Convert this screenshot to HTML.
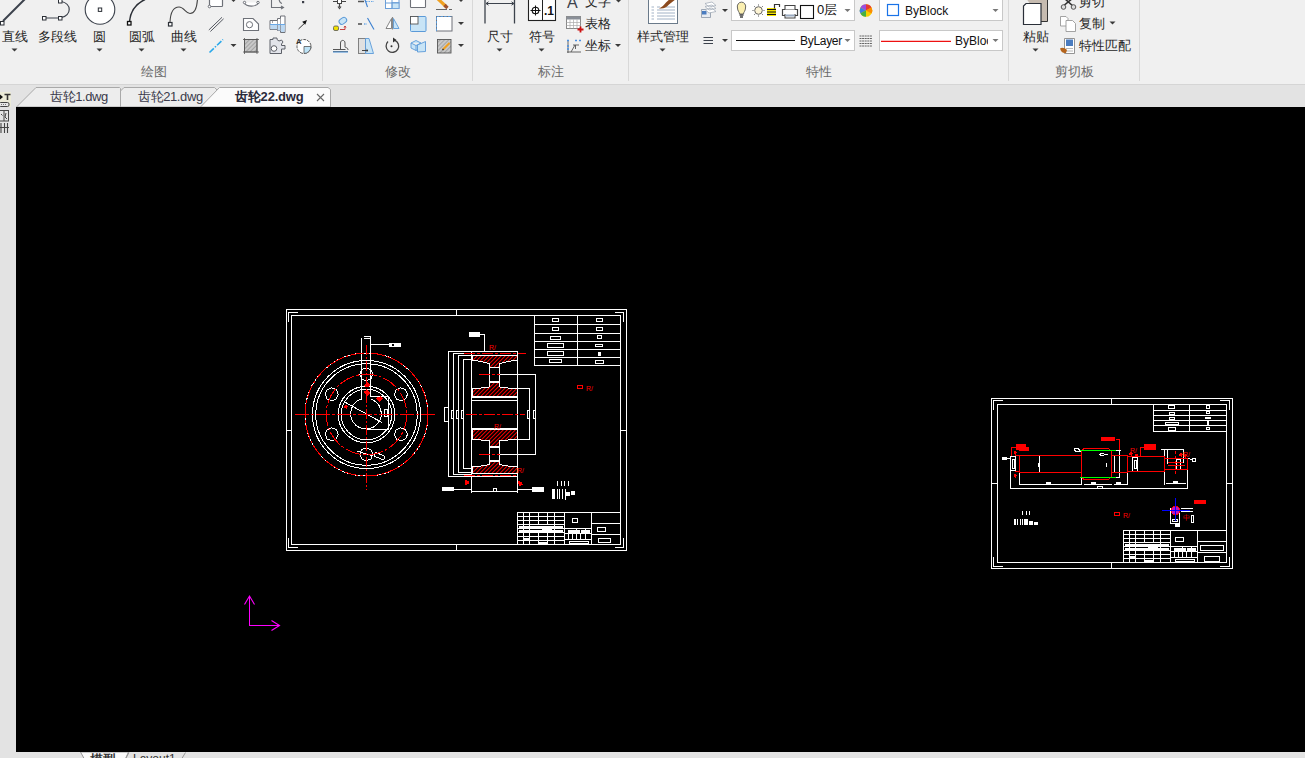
<!DOCTYPE html>
<html><head><meta charset="utf-8">
<style>
*{margin:0;padding:0;box-sizing:border-box}
html,body{width:1305px;height:758px;overflow:hidden;background:#e3e3e3;font-family:"Liberation Sans",sans-serif;color:#333}
#ribbon{position:absolute;left:0;top:0;width:1305px;height:85px;background:#f0f0f0;border-bottom:1px solid #d5d5d5;overflow:hidden}
.t{position:absolute;white-space:nowrap;font-size:13px;line-height:15px;color:#262626}
.glab{position:absolute;top:64px;font-size:13px;line-height:15px;color:#6a6a6a;white-space:nowrap}
.sep{position:absolute;top:0;width:1px;height:81px;background:#d8d8d8}
.cb{position:absolute;white-space:nowrap;font-size:12px;line-height:14px;color:#111}
#tabs{position:absolute;left:0;top:85px;width:1305px;height:22px}
.tab{position:absolute;top:4px;font-size:13px;line-height:16px;letter-spacing:-0.4px;white-space:nowrap;color:#3a3a4a}
#canvas{position:absolute;left:16px;top:107px;width:1289px;height:645px;background:#000;overflow:hidden}
</style></head><body>
<div id="ribbon">
<svg id="rsvg" width="1305" height="84" style="position:absolute;left:0;top:0">
<defs>
<pattern id="hat" width="3" height="3" patternUnits="userSpaceOnUse" patternTransform="rotate(45)"><rect width="3" height="3" fill="#c8c8c8"/><line x1="0" y1="0" x2="0" y2="3" stroke="#8a8a8a" stroke-width="1.2"/></pattern>
</defs>
<g fill="#3a3a3a">
<!-- dropdown arrows -->
<path d="M11.5 48.5h6l-3 3z"/><path d="M96.5 48.5h6l-3 3z"/><path d="M138.5 48.5h6l-3 3z"/><path d="M180.5 48.5h6l-3 3z"/>
<path d="M230.5 -1h6l-3 3z"/><path d="M230.5 44h6l-3 3z"/>
<path d="M458 -1h6l-3 3z"/><path d="M458 22h6l-3 3z"/><path d="M458 44h6l-3 3z"/>
<path d="M496.5 48.5h6l-3 3z"/><path d="M538.5 48.5h6l-3 3z"/>
<path d="M615.5 -0.5h6l-3 3z"/><path d="M615 44h6l-3 3z"/>
<path d="M659.5 48.5h6l-3 3z"/>
<path d="M722 9h6l-3 3z"/><path d="M722 39h6l-3 3z"/>
<path d="M1032.5 48.5h6l-3 3z"/><path d="M1109.5 21.5h6l-3 3z"/>
</g>
<!-- 直线 -->
<line x1="3" y1="21" x2="26" y2="-2" stroke="#3c424c" stroke-width="2"/>
<rect x="0.5" y="21.5" width="3.5" height="3.5" fill="#fff" stroke="#2b2f36" stroke-width="1"/>
<!-- 多段线 -->
<path d="M46 18H59.5M61.5 1.5A10.5 8.3 0 0 1 61.5 17.5" fill="none" stroke="#3c424c" stroke-width="1.2"/>
<rect x="42.5" y="16.5" width="3.5" height="3.5" fill="#fff" stroke="#2b2f36"/>
<rect x="58.5" y="16.5" width="3.5" height="3.5" fill="#fff" stroke="#2b2f36"/>
<rect x="58.5" y="-0.5" width="3.5" height="3.5" fill="#fff" stroke="#2b2f36"/>
<!-- 圆 -->
<circle cx="100" cy="9.5" r="14.8" fill="#fff" stroke="#3c424c" stroke-width="1.1"/>
<rect x="98.3" y="8" width="3.4" height="3.4" fill="#fff" stroke="#2b2f36"/>
<!-- 圆弧 -->
<path d="M129.5 21.5Q131 6 145 -0.5" fill="none" stroke="#2b2f36" stroke-width="1.5"/>
<rect x="127.5" y="21.5" width="3.5" height="3.5" fill="#fff" stroke="#111" stroke-width="1.3"/>
<!-- 曲线 -->
<path d="M170 22C170.5 12 174 7 179 7C184 7 186 13.5 190 13.5C195 13.5 197 7 197.5 -1" fill="none" stroke="#444" stroke-width="1.1"/>
<rect x="168.5" y="22.5" width="3.5" height="3.5" fill="#fff" stroke="#2b2f36" stroke-width="1.2"/>
<!-- row1 small icons -->
<rect x="209.5" y="-4" width="13" height="10.5" rx="0.8" fill="#fff" stroke="#6e7178" stroke-width="1.2"/>
<circle cx="209.5" cy="6.5" r="1.3" fill="#fff" stroke="#6e7178"/>
<path d="M244 2.5A8 5.5 0 0 0 259 2.5" fill="#fff" stroke="#6e7178" stroke-width="1.1"/>
<circle cx="244.5" cy="2.5" r="1.2" fill="#fff" stroke="#6e7178"/><circle cx="258" cy="2.5" r="1.2" fill="#fff" stroke="#6e7178"/>
<path d="M271.5 -2V7.5H283.5M281 6l2.5 1.5L281 9M279 -1Q279.5 3 282 3.5" fill="none" stroke="#6e7178" stroke-width="1.1"/>
<rect x="302" y="1" width="2.2" height="2.2" fill="#3b3f48"/>
<!-- row2 -->
<path d="M208.8 30L222 17.3M210.4 31.5L223.6 18.8" stroke="#575b63" stroke-width="1"/>
<path d="M243.5 18.5H253L258.5 24V30.5H243.5Z" fill="#fff" stroke="#6e7178" stroke-width="1.1"/>
<circle cx="249.5" cy="24.7" r="3.1" fill="#fff" stroke="#6e7178" stroke-width="1"/>
<path d="M270 20.5H277.5V18.5H280.5V16H285V32.5H280.5V30.5H277.5V29.5H270Z" fill="#fff" stroke="#6e7178" stroke-width="1"/>
<rect x="270.5" y="25" width="14" height="4.2" fill="#bcd8f2"/><rect x="278" y="25" width="6.5" height="5.5" fill="#bcd8f2"/><rect x="281" y="25" width="3.5" height="7" fill="#bcd8f2"/>
<path d="M277.5 20.5V29.5M280.5 18.5V30.5M272.5 21V23" stroke="#8a8d94" stroke-width="0.8"/>
<line x1="270" y1="24.5" x2="285" y2="24.5" stroke="#6aa8e6" stroke-width="1"/>
<path d="M298.5 29L304 23.8" stroke="#333" stroke-width="1"/><path d="M307 20L302.2 21.8L305.2 24.8Z" fill="#111"/>
<!-- row3 -->
<path d="M209.5 52.5L223 39.5" stroke="#2aa8ea" stroke-width="1.6" stroke-dasharray="6 1.5 1.5 1.5"/>
<rect x="244.5" y="39.5" width="12.5" height="12.5" fill="url(#hat)" stroke="#666" stroke-width="1"/>
<path d="M243 39.5H259M243 52H259M244.5 38V54M257 38V54" stroke="#555" stroke-width="0.8"/>
<path d="M270 39.5H273V38H277V39.5L279 41L281.5 40L283 42L281.5 44V45.5H285V49H281.5V53.5H270Z" fill="#e2e4ea" stroke="#5d6068" stroke-width="1"/>
<circle cx="274" cy="48.5" r="2.8" fill="#fff" stroke="#5d6068"/>
<circle cx="304" cy="46.5" r="7" fill="#fff" stroke="#555" stroke-width="1" stroke-dasharray="3 1"/>
<path d="M304 46.5H311A7 7 0 0 1 304 53.5Z" fill="#bde3f7" stroke="#555" stroke-width="0.8"/>
<text x="296" y="44" font-family="Liberation Sans" font-size="7.5" font-weight="bold" fill="#333">A</text>
<!-- 修改 row1 -->
<path d="M333 1.5H346M339.5 -3V7" stroke="#444" stroke-width="1.2"/><rect x="337.5" y="-0.5" width="4" height="4" fill="#fff" stroke="#444"/>
<path d="M336 1.5l-1.5 0M338 6.5l1.5 2l1.5 -2" stroke="#444" stroke-width="1.2" fill="none"/>
<path d="M358 1.5H364" stroke="#555" stroke-width="1.5"/><path d="M366 1.5H374" stroke="#6aa8e6" stroke-width="1.2" stroke-dasharray="1.5 1"/>
<path d="M364 -3L367.5 7" stroke="#3a7fd0" stroke-width="1.1"/>
<rect x="385.5" y="-2" width="13.5" height="10.5" fill="#fff" stroke="#6a9ed8" stroke-width="1"/>
<rect x="392" y="2.5" width="7" height="6" fill="#c8e4f6" stroke="#6a9ed8" stroke-width="0.8"/><path d="M385.5 3H399M392 -2V8.5" stroke="#6a9ed8" stroke-width="1"/>
<rect x="410.5" y="-3" width="15" height="10.5" rx="0.8" fill="#fff" stroke="#6e7178" stroke-width="1.1"/>
<path d="M437 -2L446 6.5" stroke="#f0a020" stroke-width="3.2"/><path d="M444.5 5L447.5 8" stroke="#a0522d" stroke-width="3.2"/>
<path d="M436 9.5H447M449 9.5H452" stroke="#555" stroke-width="0.9"/>
<!-- 修改 row2 -->
<rect x="333.5" y="26" width="5" height="4.5" rx="1.5" fill="#f0e000" stroke="#555" stroke-width="0.8"/>
<rect x="339" y="18" width="8" height="5.5" rx="2.7" transform="rotate(-35 343 21)" fill="#c8e4f6" stroke="#5b9ad8" stroke-width="1"/>
<path d="M340 29.5H345V26.5M344 27.5l1-1.5l1 1.5" stroke="#c03030" fill="none" stroke-width="0.9"/>
<path d="M358 24H362" stroke="#555" stroke-width="1.6"/><path d="M364 24H367" stroke="#6aa8e6" stroke-width="1.3" stroke-dasharray="1.5 1"/><path d="M367.5 18L374 29.5" stroke="#3a7fd0" stroke-width="1.1"/>
<path d="M391.5 18.5L386 28.5H391.5Z" fill="#fff" stroke="#777" stroke-width="0.9"/><path d="M393.5 18.5L399 28.5H393.5Z" fill="#c8e4f6" stroke="#5b9ad8" stroke-width="0.9"/><line x1="392.5" y1="17" x2="392.5" y2="29.5" stroke="#888" stroke-width="1.2"/>
<rect x="410.5" y="16.5" width="15.5" height="15" rx="1" fill="#c8e4f6" stroke="#5b9ad8" stroke-width="1"/><rect x="410.5" y="16.5" width="7.5" height="7.5" fill="#fff" stroke="#555" stroke-width="0.9"/>
<rect x="436.5" y="16.5" width="15.5" height="14.5" fill="#fff" stroke="#6e7178" stroke-width="1"/><path d="M436.5 31V16.5H452" fill="none" stroke="#5b9ad8" stroke-width="1" stroke-dasharray="2.5 1.2"/>
<!-- 修改 row3 -->
<path d="M333 51.5H348M333 49.5H345.5M340.5 49.5V43C340.5 39.5 345 39.5 345 43V47C345 48 348 47 348 50" fill="none" stroke="#555" stroke-width="1"/><path d="M333 52H348" stroke="#5b9ad8" stroke-width="1.2"/>
<rect x="358.5" y="38.5" width="7" height="15" fill="#e0e0e0" stroke="#777" stroke-width="0.9"/><path d="M365.5 38.5H369L373.5 53.5H365.5Z" fill="#c8e4f6" stroke="#5b9ad8" stroke-width="0.9"/><path d="M362 50.5H368M366.5 49.3L368 50.5L366.5 51.7" fill="none" stroke="#333" stroke-width="0.9"/>
<path d="M395 40.3A6.3 6.3 0 1 1 388 41.5" fill="none" stroke="#444" stroke-width="1.3"/><path d="M393 37.5L396.5 40L393 42.5Z" fill="#333"/><circle cx="391.5" cy="46.3" r="1" fill="#333"/>
<path d="M411 43L416 40.5L421 43V48L416 50.5L411 48Z M416 45.5V50.5M411 43L416 45.5L421 43" fill="#c8e4f6" stroke="#5b9ad8" stroke-width="0.9"/><path d="M417.5 45L425.5 41.5V51.5L417.5 52Z" fill="#c8e4f6" stroke="#5b9ad8" stroke-width="0.9"/>
<rect x="437.5" y="39.5" width="13.5" height="13.5" fill="url(#hat)" stroke="#555" stroke-width="0.9"/><path d="M443 49.5L449.5 43" stroke="#f0a020" stroke-width="2.2"/><path d="M442.5 50L443.5 49" stroke="#333" stroke-width="1.5"/>
<!-- 标注 -->
<path d="M485 -1V23.5M514.5 -1V23.5" stroke="#3c424c" stroke-width="1.3"/>
<path d="M486 3.5H514M488.5 1.8L486 3.5L488.5 5.2M511.5 1.8L514 3.5L511.5 5.2" fill="none" stroke="#3c424c" stroke-width="1"/>
<rect x="528.5" y="-1" width="27" height="21.5" fill="#fff" stroke="#222" stroke-width="1.1"/>
<line x1="542.5" y1="-1" x2="542.5" y2="20.5" stroke="#222" stroke-width="1"/>
<circle cx="535.5" cy="10.5" r="3.3" fill="none" stroke="#111" stroke-width="1.1"/><path d="M530.5 10.5H540.5M535.5 5.5V15.5" stroke="#111" stroke-width="1"/>
<text x="544" y="15" font-family="Liberation Sans" font-size="12" font-weight="bold" fill="#111">.1</text>
<text x="567" y="8" font-family="Liberation Sans" font-size="16" fill="#3c424c">A</text>
<rect x="566.5" y="16.5" width="14" height="12" fill="#fff" stroke="#888" stroke-width="1"/><rect x="566.5" y="16.5" width="14" height="3" fill="#8a8f98"/>
<path d="M566.5 22.5H580.5M566.5 25.5H580.5M570 19.5V28.5M573.5 19.5V28.5M577 19.5V28.5" stroke="#aaa" stroke-width="0.7"/>
<path d="M577.5 29.5H583.5M580.5 26.5V32.5" stroke="#cc1111" stroke-width="1.8"/>
<path d="M568 40.5V53M567 52H581M571 52L575 45M573 45H579M575.5 45V49" fill="none" stroke="#555" stroke-width="0.9"/>
<path d="M567 40.5H569M567 46H569M575 40.5H577M579 40.5H581M567 49H569" stroke="#4a90e2" stroke-width="1.3"/>
<!-- 特性 -->
<rect x="648.5" y="-3" width="29" height="26.5" fill="#fff" stroke="#6a7a8a" stroke-width="1"/>
<path d="M651.5 7H654M651.5 10H654M651.5 13H654M651.5 16H654M651.5 19H654M657 7H660M666 7H675M657 10H675M657 13H675M657 16H675M657 19H675" stroke="#8aa0b8" stroke-width="0.8"/>
<path d="M659 8.5C662 7 664 5 666 2.5L672 -3L676 -1L669 4.5C667 7 664 9 659 8.5Z" fill="#8b4a1e"/>
<path d="M701.5 9.5H710.5V17.5H701.5Z" fill="#e8ecf2" stroke="#8a96a6" stroke-width="0.8"/><rect x="702" y="11" width="4.5" height="3.5" fill="#4a7cc0"/>
<path d="M705 3.5L712 2L716 5.5L709 7Z M705 6.5L712 5L716 8.5L709 10Z M705 9.5L712 8L716 11.5L709 13Z" fill="#fff" stroke="#9aa4b0" stroke-width="0.7"/>
<path d="M703.5 37.5H713M703.5 40.5H713M703.5 43.5H713" stroke="#3c424c" stroke-width="1.2"/>
<!-- combos -->
<rect x="731.5" y="-0.5" width="123" height="21" fill="#fff" stroke="#c8c8c8"/>
<rect x="731.5" y="30.5" width="123" height="20" fill="#fff" stroke="#c8c8c8"/>
<rect x="879.5" y="-0.5" width="123" height="21" fill="#fff" stroke="#c8c8c8"/>
<rect x="879.5" y="30.5" width="123" height="20" fill="#fff" stroke="#c8c8c8"/>
<g fill="#777"><path d="M844.5 9h6l-3 3z"/><path d="M844.5 39h6l-3 3z"/><path d="M992.5 9h6l-3 3z"/><path d="M992.5 39h6l-3 3z"/></g>
<path d="M737.5 8A4.2 4.5 0 1 1 745.5 8C745.5 11 743.5 12 743.5 14H739.5C739.5 12 737.5 11 737.5 8Z" fill="#fbefb0" stroke="#555" stroke-width="0.9"/><path d="M739.5 15h4M740 17h3" stroke="#444" stroke-width="1.4"/>
<circle cx="758.5" cy="10.5" r="3.8" fill="#fdf4d4" stroke="#555" stroke-width="0.9"/>
<path d="M758.5 4.5V5.5M758.5 15.5V16.5M752.5 10.5H753.5M763.5 10.5H764.5M754.2 6.2L754.9 6.9M762.1 14.1L762.8 14.8M762.8 6.2L762.1 6.9M754.9 14.1L754.2 14.8" stroke="#444" stroke-width="0.9"/>
<rect x="767" y="8" width="9" height="8" fill="#f2e200"/><path d="M767 9.5H776M767 12H776M767 14.5H776" stroke="#111" stroke-width="1"/><path d="M774.5 8.5V4.5H779.5V7" fill="none" stroke="#333" stroke-width="1.2"/>
<path d="M782.5 9.5H797.5V15.5H782.5Z" fill="#fff" stroke="#444" stroke-width="1.2"/><path d="M785 9.5V5.5H795V9.5M785 14V18H795V14" fill="#fff" stroke="#444" stroke-width="1.1"/><rect x="785.5" y="14.5" width="9" height="2" fill="#9aaac0"/>
<rect x="800.5" y="5.5" width="13" height="13" fill="#fff" stroke="#111" stroke-width="1.1"/>
<line x1="736" y1="40.5" x2="795" y2="40.5" stroke="#111" stroke-width="1.2"/>
<circle cx="866" cy="10.5" r="6.3" fill="#f5d000"/>
<path d="M866 10.5L866 4.2A6.3 6.3 0 0 1 871.5 7.4Z" fill="#e53935"/><path d="M866 10.5L871.5 7.4A6.3 6.3 0 0 1 871.5 13.6Z" fill="#fb8c00"/>
<path d="M866 10.5L866 4.2A6.3 6.3 0 0 0 860.5 7.4Z" fill="#9c4de0"/><path d="M866 10.5L860.5 7.4A6.3 6.3 0 0 0 860.5 13.6Z" fill="#3b82e0"/><path d="M866 10.5L860.5 13.6A6.3 6.3 0 0 0 866 16.8Z" fill="#43b043"/>
<path d="M859.5 36H872M859.5 38.5H872M859.5 41H872M859.5 43.5H872M859.5 46H872" stroke="#555" stroke-width="0.9" stroke-dasharray="2 0.6"/>
<rect x="887.5" y="4.5" width="11" height="11" fill="#fff" stroke="#1a73e8" stroke-width="1.2"/>
<line x1="881" y1="41.3" x2="951" y2="41.3" stroke="#ee1111" stroke-width="1.2"/>
<!-- 剪切板 -->
<path d="M1025.5 -3H1047.5V21.5H1041" fill="#c6bbb0" stroke="#333" stroke-width="1"/>
<path d="M1026 3.5H1041V24.5H1023.5V6Z" fill="#fff" stroke="#2a2f38" stroke-width="1.2"/>
<path d="M1062 7L1073 -2M1064 -2L1074 7" stroke="#333" stroke-width="1.6"/><circle cx="1063.5" cy="7" r="2.3" fill="#ddd" stroke="#555"/><circle cx="1073.5" cy="7" r="2.3" fill="#ddd" stroke="#555"/>
<path d="M1060.5 16.5H1066L1068 18.5V26H1060.5Z" fill="#fff" stroke="#999" stroke-width="0.9"/>
<path d="M1066 20.5H1072.5L1075.5 23.5V31.5H1066Z" fill="#fff" stroke="#999" stroke-width="0.9"/>
<path d="M1064.5 38.5H1074.5V53.5H1064.5Z" fill="#fff" stroke="#888" stroke-width="0.9"/><rect x="1066" y="39.5" width="7" height="6.5" fill="#4a7cc0"/>
<path d="M1066 48.5H1073M1066 51H1073" stroke="#999" stroke-width="0.7"/>
<path d="M1060 48.5C1062 47 1065 48 1067 50L1066 53C1063 53.5 1061 52 1060 48.5Z" fill="#b5651d"/>
</svg>
  <div class="t" style="left:2px;top:29px">直线</div>
  <div class="t" style="left:38px;top:29px">多段线</div>
  <div class="t" style="left:93px;top:29px">圆</div>
  <div class="t" style="left:129px;top:29px">圆弧</div>
  <div class="t" style="left:171px;top:29px">曲线</div>
  <div class="glab" style="left:141px">绘图</div>
  <div class="sep" style="left:322px"></div>
  <div class="glab" style="left:385px">修改</div>
  <div class="sep" style="left:472px"></div>
  <div class="t" style="left:487px;top:29px">尺寸</div>
  <div class="t" style="left:529px;top:29px">符号</div>
  <div class="t" style="left:585px;top:-6px">文字</div>
  <div class="t" style="left:585px;top:16px">表格</div>
  <div class="t" style="left:585px;top:38px">坐标</div>
  <div class="glab" style="left:538px">标注</div>
  <div class="sep" style="left:628px"></div>
  <div class="t" style="left:637px;top:29px">样式管理</div>
  <div class="cb" style="left:817px;top:3px;font-size:13px">0层</div>
  <div class="cb" style="left:800px;top:34px;letter-spacing:-0.3px">ByLayer</div>
  <div class="cb" style="left:905px;top:4px">ByBlock</div>
  <div class="cb" style="left:955px;top:34px;width:33px;overflow:hidden">ByBlock</div>
  <div class="glab" style="left:806px">特性</div>
  <div class="sep" style="left:1008px"></div>
  <div class="t" style="left:1023px;top:29px">粘贴</div>
  <div class="t" style="left:1079px;top:-6px">剪切</div>
  <div class="t" style="left:1079px;top:16px">复制</div>
  <div class="t" style="left:1079px;top:38px">特性匹配</div>
  <div class="glab" style="left:1055px">剪切板</div>
  <div class="sep" style="left:1139px"></div>
</div>
<div id="tabs">
<svg width="1305" height="22" style="position:absolute;left:0;top:0">
<path d="M16.5 22L36 2.5H119.5L120.5 3.5V22Z" fill="#ededed" stroke="#a9a9a9" stroke-width="1"/>
<path d="M120.5 22V6L124 2.5H214.5L218 6V22Z" fill="#ededed" stroke="#a9a9a9" stroke-width="1"/>
<path d="M200.5 22L219.5 2.5H328L330.5 4.5V22Z" fill="#fbfbfb" stroke="#a9a9a9" stroke-width="1"/>
</svg>
<div class="tab" style="left:50px">齿轮1.dwg</div>
<div class="tab" style="left:138px">齿轮21.dwg</div>
<div class="tab" style="left:235px;font-weight:bold;color:#2a2a3a;letter-spacing:-0.2px">齿轮22.dwg</div>
<svg width="10" height="10" style="position:absolute;left:316px;top:8px"><path d="M1 1L8 8M8 1L1 8" stroke="#666" stroke-width="1.1"/></svg>
</div>
<svg width="16" height="60" style="position:absolute;left:0;top:85px">
<rect x="0" y="7" width="11" height="15" fill="#ecebd8"/>
<path d="M0 9.5L3 12L0 14.5Z" fill="#111"/>
<path d="M4.5 9.5H10.5M7.5 9.5V15" stroke="#333" stroke-width="1.6"/>
<rect x="-1" y="17.5" width="10" height="4" rx="1.5" fill="#e8e8e8" stroke="#444" stroke-width="1"/>
<path d="M1 19.5H7" stroke="#777" stroke-width="1" stroke-dasharray="1 1"/>
<rect x="-1" y="25.5" width="9.5" height="10.5" fill="none" stroke="#444" stroke-width="1"/>
<path d="M4 25.5V36M1 29L2.5 30.5M6 28L5 32L7 34" stroke="#444" stroke-width="1" fill="none"/>
<path d="M1 38V48M4.5 38V48M7.5 38V48M0 42.5H9" stroke="#444" stroke-width="1.1"/>
</svg>
<div id="canvas">
<svg width="1305" height="758" style="position:absolute;left:-16px;top:-107px" shape-rendering="crispEdges">
<defs>
<pattern id="rh" width="2.83" height="2.83" patternUnits="userSpaceOnUse" patternTransform="rotate(45)"><rect width="2.83" height="2.83" fill="#000"/><rect x="0" y="0" width="1.3" height="2.83" fill="#ff0000"/></pattern>
<g id="tb" fill="none" stroke="#fff" stroke-width="1">
<rect x="0.5" y="0.5" width="103" height="32"/>
<path d="M47 0.5V32.5M74.5 0.5V32.5M74.5 11.5H103.5M74.5 22.5H103.5M47 16.5H74.5"/>
<path d="M6.5 0.5V32.5M12.5 0.5V32.5M21.5 0.5V12.5M30.5 0.5V12.5M37.5 0.5V32.5M21.5 20.5V32.5M30.5 20.5V32.5"/>
<path d="M0.5 4.5H47M0.5 8.5H47M0.5 12.5H47M0.5 16.5H47M0.5 20.5H47M0.5 24.5H47M0.5 28.5H47"/>
<g fill="#fff" stroke="none"><rect x="2" y="13.5" width="44" height="2"/><rect x="2" y="17.5" width="44" height="2.2"/><rect x="7" y="25.5" width="5" height="2"/><rect x="22" y="29.5" width="8" height="2"/><rect x="25" y="17" width="10" height="3"/></g>

<path d="M47 21.5H74.5M47 27.5H74.5M51.5 21.5V27.5M55.5 21.5V27.5M59.5 21.5V27.5M63.5 21.5V27.5M68.5 16.5V27.5M59.5 16.5V21.5"/>
<rect x="50.5" y="18" width="12" height="2.5" fill="#fff" stroke="none"/><rect x="64" y="18" width="9" height="2.5" fill="#fff" stroke="none"/>
<rect x="52.5" y="29" width="19" height="2.5"/>

</g>
</defs>
<g fill="none" stroke="#fff" stroke-width="1">
<!-- ===== Drawing 1 frame ===== -->
<rect x="286.5" y="309.5" width="340" height="241"/>
<rect x="291.5" y="315.5" width="329" height="229"/>
<path d="M288.5 322V312.5H298M615 312.5H623.5V322M288.5 538V547.5H298M615 547.5H623.5V538"/>
<path d="M456.5 309.5V315.5M456.5 544.5V550.5M286.5 430.5H291.5M620.5 430.5H626.5"/>
<!-- table 1 -->
<path d="M534.5 315.5V365.5H620.5M577.5 315.5V365.5M534.5 324.5H620.5M534.5 333.5H620.5M534.5 341.5H620.5M534.5 349.5H620.5M534.5 357.5H620.5"/>
<rect x="552.5" y="318.5" width="6" height="3"/><rect x="552.5" y="327.5" width="6" height="3"/><rect x="550.5" y="336" width="10" height="3"/><rect x="547.5" y="343.5" width="16" height="4"/><rect x="547.5" y="351.5" width="16" height="4"/><rect x="549.5" y="359.5" width="12" height="3"/>
<rect x="596.5" y="318.5" width="6" height="3"/><rect x="596.5" y="327.5" width="6" height="3"/><rect x="597.5" y="335.5" width="4" height="3"/><rect x="595.5" y="344" width="7" height="2"/><rect x="598.5" y="352" width="2" height="3" fill="#fff"/><rect x="595.5" y="360" width="8" height="3"/>
</g>
<use href="#tb" x="517" y="512"/>
<g fill="none" stroke="#fff" stroke-width="1"><rect x="572.5" y="518.5" width="5" height="4"/><rect x="597.5" y="527.5" width="8" height="4"/><rect x="598.5" y="538" width="12" height="4.5"/></g>
<g fill="none" stroke="#fff" stroke-width="1">
<!-- ===== Circle view ===== -->
<circle cx="366.5" cy="414.5" r="61.5"/>
<circle cx="366.5" cy="414.5" r="54"/>
<circle cx="366.5" cy="414.5" r="50.7"/>
<circle cx="366.5" cy="414.5" r="28.3"/>
<circle cx="366.5" cy="414.5" r="25.3"/>
<path d="M361.5 399A15.3 15.3 0 1 0 371 399.2"/>
<g>
<polygon points="372.9,374.3 370.9,378.9 366.3,380.8 361.7,378.9 359.8,374.3 361.7,369.7 366.3,367.8 370.9,369.7" />
<polygon points="372.9,454.3 370.9,458.9 366.3,460.8 361.7,458.9 359.8,454.3 361.7,449.7 366.3,447.8 370.9,449.7" />
<g transform="translate(-34.6,20)"><polygon points="372.9,374.3 370.9,378.9 366.3,380.8 361.7,378.9 359.8,374.3 361.7,369.7 366.3,367.8 370.9,369.7"/></g>
<g transform="translate(34.6,20)"><polygon points="372.9,374.3 370.9,378.9 366.3,380.8 361.7,378.9 359.8,374.3 361.7,369.7 366.3,367.8 370.9,369.7"/></g>
<g transform="translate(-34.6,60)"><polygon points="372.9,374.3 370.9,378.9 366.3,380.8 361.7,378.9 359.8,374.3 361.7,369.7 366.3,367.8 370.9,369.7"/></g>
<g transform="translate(34.6,60)"><polygon points="372.9,374.3 370.9,378.9 366.3,380.8 361.7,378.9 359.8,374.3 361.7,369.7 366.3,367.8 370.9,369.7"/></g>
<path d="M345.5 402.5L382 422.5"/>
</g>
<path d="M361.5 337.5V399M370.5 336.5V396.5H388.5V429.5H366M363.5 336.5H370.5V338.5H363.5M370.5 344.5H389"/>
<rect x="384.5" y="409.5" width="3" height="7"/>
<rect x="389.5" y="343" width="11" height="3.5" rx="1" fill="#fff"/>
<rect x="392" y="344" width="2" height="1.5" fill="#000" stroke="none"/>
<g><path d="M357 451L373 456"/><rect x="374" y="454" width="11" height="4" rx="1.5" transform="rotate(22 379 456)"/></g>
</g>
<g fill="none" stroke="#ff0000" stroke-width="1">
<circle cx="366.5" cy="414.5" r="61.5" stroke-dasharray="14 2 3 2"/>
<circle cx="366.5" cy="414.5" r="40.3" stroke-dasharray="16 2 3 2"/>
<path d="M295 414.5H437" stroke-dasharray="14 2 3 2"/>
<path d="M366.5 345V490" stroke-dasharray="10 2 2 2"/>

</g>
<g fill="#ff0000">
<path d="M364 385l3-3 3 3 -1 2 h-4z"/><path d="M363 392l4 -2 3 3 -3 3z"/>
<path d="M376 398l5-2 2 3-4 3z"/><path d="M345 405l3 1-1 3-3-1z"/>
</g>
<!-- ===== Side view ===== -->
<g fill="none" stroke="#fff" stroke-width="1">
<path d="M448.5 351.5H517.5V476.5H448.5Z"/>
<path d="M471.5 351.5V476.5"/>
<path d="M471.5 353.5H453.5V474.5H471.5M471.5 355.5H458.5V472.5H471.5M471.5 359.5H463.5V468.5H471.5"/>
<path d="M444.5 407.5H448.5V421.5H444.5ZM451.5 410.5H453.5V418.5H451.5ZM456.5 410.5H458.5V418.5H456.5ZM461.5 410.5H463.5V418.5H461.5Z"/>
<path d="M499.5 374.5H535.5V454.5H499.5M517.5 388.5H529.5V439.5H517.5"/>
<path d="M527.5 410.5H529.5V418.5H527.5ZM533.5 410.5H535.5V418.5H533.5Z"/>
<path d="M489.5 362V388M499.5 362V388M489.5 441V467M499.5 441V467"/>
<path d="M489.5 367.5H499.5M489.5 381.5H499.5M489.5 447.5H499.5M489.5 460.5H499.5"/>
<path d="M472 397.5H517M472 400.5H517M472 428.5H517M472 431H517"/>
<path d="M471.5 476.5V493M517.5 476.5V493M471.5 491.5H517.5M454 489.5H471.5M517.5 489.5H532"/>
<rect x="442.5" y="487.5" width="11" height="3" fill="#fff"/><rect x="532.5" y="487" width="11" height="4" fill="#fff"/>
<rect x="493.5" y="488.5" width="3" height="3"/>
<path d="M480 334.5H484.5V351.5"/>
<rect x="469.5" y="332" width="10" height="4" fill="#fff"/>
</g>
<g stroke="none">
<path d="M472 355.5H517V360L508 361.5L499.5 363.5V367H489.5V363.5L481 361.5L472 360Z" fill="url(#rh)" stroke="#fff" stroke-width="1"/><path d="M489.5 382H499.5V387L508 388L517 389V396.5H472V389L481 388L489.5 387Z" fill="url(#rh)" stroke="#fff" stroke-width="1"/><path d="M472 429.5H517V439L508 440L499.5 441V446H489.5V441L481 440L472 439Z" fill="url(#rh)" stroke="#fff" stroke-width="1"/><path d="M489.5 461H499.5V464.5L508 466L517 467V473.5H472V467L481 466L489.5 464.5Z" fill="url(#rh)" stroke="#fff" stroke-width="1"/></g>
<g fill="none" stroke="#ff0000" stroke-width="1">
<path d="M464 353.5H526" stroke-dasharray="11 2 3 2"/>
<path d="M466 414.5H525" stroke-dasharray="11 2 3 2"/>
<path d="M479 374.5H500M479 454.5H500" stroke-dasharray="11 2 3 2"/>
<path d="M464 475.5H517" stroke-dasharray="11 2 3 2"/>
</g>
<g fill="#ff0000" font-family="Liberation Sans" font-size="7">
<text x="489" y="350">R/</text><text x="494" y="429">R/</text><text x="517" y="473">R/</text>
<path d="M465 480l4 1v3l-4 1z"/><path d="M518 481l4 1 1 3-4 1z"/>
<rect x="577.5" y="385.5" width="5" height="3" fill="none" stroke="#ff0000"/><text x="586" y="391">R/</text>
</g>
<!-- glyph block 1 -->
<g fill="#fff" stroke="none">
<rect x="557" y="481" width="1" height="5"/><rect x="560.5" y="481" width="1" height="5"/><rect x="564" y="481" width="1" height="5"/><rect x="568" y="481" width="1" height="5"/>
<rect x="552" y="489" width="3" height="10"/><rect x="556.5" y="489" width="1" height="10"/><rect x="559" y="489" width="1" height="10"/><rect x="561.5" y="489" width="1" height="10"/>
<rect x="565" y="489" width="1" height="11"/><rect x="566" y="492" width="4" height="4"/><rect x="571" y="491" width="4" height="4"/>
</g>
<!-- ===== Drawing 2 ===== -->
<g fill="none" stroke="#fff" stroke-width="1">
<rect x="991.5" y="398.5" width="241" height="170"/>
<rect x="997.5" y="404.5" width="229" height="158"/>
<path d="M993.5 410V400.5H1003M1220 566.5H1229.5V557M1229.5 410V400.5H1220M993.5 557V566.5H1003"/>
<path d="M1111.5 398.5V404.5M1111.5 562.5V568.5M991.5 483.5H997.5M1226.5 483.5H1232.5"/>
<path d="M1153.5 404.5V431.5H1226.5M1189.5 404.5V431.5M1153.5 410.5H1226.5M1153.5 415.5H1226.5M1153.5 420.5H1226.5M1153.5 425.5H1226.5"/>
<rect x="1168.5" y="405" width="6" height="3.5"/><rect x="1169.5" y="412" width="5" height="2"/><rect x="1169.5" y="417" width="5" height="2"/><rect x="1165.5" y="422" width="13" height="2"/><rect x="1168.5" y="427" width="7" height="3"/>
<rect x="1206.5" y="405.5" width="3" height="2.5"/><rect x="1206.5" y="411.5" width="3" height="2"/><rect x="1205" y="417" width="5" height="1.5"/><rect x="1207.5" y="421.5" width="1" height="3" fill="#fff"/><rect x="1206.5" y="427" width="3" height="2.5"/>
</g>
<use href="#tb" x="1123" y="530"/>
<g fill="none" stroke="#fff" stroke-width="1"><rect x="1175.5" y="537.5" width="8" height="3.5"/><rect x="1200.5" y="545.5" width="23" height="4.5"/><rect x="1204.5" y="556.5" width="15" height="4.5"/></g>
<!-- shaft -->
<g fill="none" stroke="#fff" stroke-width="1">
<path d="M1010.5 456.5H1015.5V470.5H1010.5Z"/><path d="M1012.5 459.5H1014.5V468.5H1012.5Z"/>
<path d="M1043 455.5H1039.5V472.5H1043M1038.5 462.5V466.5"/>
<path d="M1010.5 470.5V489M1010.5 488.5H1187.5M1187.5 469.5V489"/>
<path d="M1019.5 473V484.5H1081.5V474M1083.5 484.5H1111.5M1113.5 484.5H1127.5V472M1164.5 449V485M1166 483.5H1186"/>
<rect x="1046.5" y="482" width="4" height="2" fill="#fff"/><rect x="1097.5" y="486" width="5" height="2.5"/><rect x="1091.5" y="482" width="4" height="2" fill="#fff"/><rect x="1116.5" y="482" width="4" height="2" fill="#fff"/><rect x="1173.5" y="481.5" width="4" height="2" fill="#fff"/>
<path d="M1002 458.5H1009.5" /><rect x="1002" y="457.5" width="4" height="2" fill="#fff"/>
<path d="M1110 450.5H1121M1119.5 450.5V477.5H1110M1114.5 455.5H1118M1114.5 455.5V472.5H1118M1106.5 462.5V466.5"/>
<path d="M1132.5 457.5H1137.5V471.5H1132.5Z"/><path d="M1134 460.5H1136V468.5H1134Z"/>
<path d="M1161 449.5H1169M1167.5 449.5V464M1169 449.5H1183.5V463M1176.5 459.5H1180.5V469.5H1176.5Z"/>
<path d="M1188.5 458L1192 460"/><rect x="1192.5" y="458.5" width="3" height="2.5"/>
<g><ellipse cx="1077" cy="450" rx="2.5" ry="1.6" transform="rotate(25 1077 450)"/><ellipse cx="1102" cy="454.5" rx="2" ry="1.5"/><path d="M1079 451L1081 452M1104 454.5H1108"/></g>
</g>
<g fill="none" stroke="#ff0000" stroke-width="1">
<path d="M1015.5 456L1019.5 455.5M1015.5 471L1019.5 472"/>
<rect x="1019.5" y="455.5" width="61.5" height="17"/>
<path d="M1084 448.5H1108.5L1111.5 451.5V476.5L1108.5 479.5H1084L1081 476.5V451.5Z"/>
<path d="M1111.5 455.5H1127.5V472.5H1111.5M1127.5 456.5H1164.5V471.5H1127.5"/>
<path d="M1164.5 458.5H1187.5V469.5H1164.5M1168 462.5H1183M1168 465.5H1185"/>
<path d="M1175.5 451V476" stroke-dasharray="3 2"/>
<path d="M1011.5 456V447.5H1017M1116 439.5H1119.5V450M1140.5 457V447.5H1144"/>
</g>
<g stroke="#00ff00" stroke-width="1.2"><path d="M1080 450.5H1116M1080 477.5H1116"/></g>
<g fill="#ff0000" stroke="none">
<rect x="1016" y="444" width="10" height="6"/><rect x="1019" y="447" width="10" height="4"/>
<rect x="1101" y="437" width="14" height="4"/>
<rect x="1144" y="444" width="12" height="6"/>
<path d="M1014 451l3 1-1 3-2-1zM1014 474l3 1-1 3-2-1zM1130 452l3 1-1 3-3-1zM1135 454l3 0 0 3-3 0zM1180 453l3 1-1 3-3-1zM1185 454l2 1-1 3-2-1z"/>
<rect x="1194" y="500" width="12" height="4"/>
</g>
<g fill="#ff0000" font-family="Liberation Sans" font-size="7">
<text x="1130" y="453">R/</text><text x="1183" y="457">R/</text>
<rect x="1114.5" y="512.5" width="5" height="3" fill="none" stroke="#ff0000"/><text x="1123" y="518">R/</text>
<text x="1183" y="520">中</text>
</g>
<g fill="#fff" stroke="none">
<rect x="1022" y="511" width="1" height="4"/><rect x="1025.5" y="511" width="1" height="4"/><rect x="1029" y="511" width="1" height="4"/>
<rect x="1014" y="519" width="2" height="6"/><rect x="1017" y="519" width="1" height="6"/><rect x="1019.5" y="519" width="1" height="6"/><rect x="1022" y="519" width="1" height="6"/><rect x="1024" y="519" width="4" height="6"/><rect x="1029" y="521" width="4" height="4"/><rect x="1034" y="522" width="3.5" height="3"/>
</g>
<g fill="none" stroke="#fff" stroke-width="1">
<path d="M1170.5 508V523.5H1179.5V512M1181 508.5H1193M1181 511.5H1193"/><rect x="1191.5" y="515.5" width="2" height="7"/>
<rect x="1172.5" y="519.5" width="5" height="2"/><rect x="1175" y="524.5" width="4" height="1.5" fill="#fff"/>
</g>
<circle cx="1175.5" cy="510.5" r="4.5" fill="#c010c0" stroke="#ff0000" stroke-width="1"/>
<path d="M1162 510.5H1190M1175.5 498V521" stroke="#0000ff" stroke-width="1"/>
<!-- UCS -->
<g stroke="#ff00ff" stroke-width="1" fill="none">
<path d="M249.5 625.5V596M249.5 625.5H279"/>
<path d="M244.5 604.5L249.5 596L254.5 604.5M271.5 620.5L279.5 625.5L271.5 630.5" shape-rendering="geometricPrecision" stroke-width="1.1"/>
</g>
</svg>
</div>
<div style="position:absolute;left:0;top:752px;width:1305px;height:6px;overflow:hidden">
<svg width="1305" height="6" style="position:absolute;left:0;top:0">
<path d="M80.5 0L86 10H124L128.5 0Z" fill="#fafafa" stroke="#999" stroke-width="1"/>
<path d="M129 0.5L125 8M185.5 0.5L181 8" stroke="#999" stroke-width="1"/>
</svg>
<div style="position:absolute;left:90px;top:0px;font-size:13px;line-height:15px;font-weight:bold;color:#333;white-space:nowrap">模型</div>
<div style="position:absolute;left:133px;top:0px;font-size:12px;line-height:15px;color:#333;white-space:nowrap">Layout1</div>
</div>
</body></html>
